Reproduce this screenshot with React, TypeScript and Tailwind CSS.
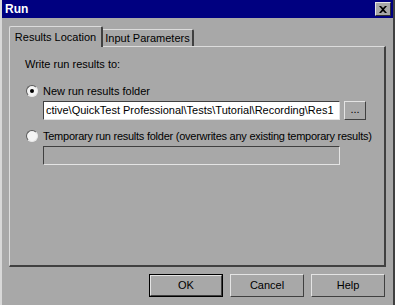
const font = "font-['Liberation_Sans',Arial,sans-serif]";

const Radio = ({ checked }: { checked: boolean }) => (
  <span className="relative flex h-[12px] w-[12px] shrink-0 items-center justify-center rounded-full border border-t-[#5a5a5a] border-l-[#5a5a5a] border-b-[#e8e8e8] border-r-[#e8e8e8] bg-[#f4f4f4]">
    {checked && <span className="h-[4px] w-[4px] rounded-full bg-black" />}
  </span>
);

const Btn = ({ label, def }: { label: string; def?: boolean }) => (
  <button
    type="button"
    className={`h-[23px] w-[74px] text-[11px] text-black ${
      def ? "border border-black" : ""
    }`}
  >
    <span className="flex h-full w-full items-center justify-center border border-t-[#e4e4e4] border-l-[#e4e4e4] border-b-[#404040] border-r-[#404040] bg-[#a8a8a8]">
      {label}
    </span>
  </button>
);

export default function App() {
  return (
    <div
      className={`${font} flex h-[305px] w-[395px] flex-col overflow-hidden border-l-2 border-r-2 border-l-[#d8d8d8] border-r-[#404040] bg-[#a8a8a8] text-black`}
    >
      <div className="flex h-[18px] shrink-0 items-center justify-between bg-[#000080] pl-[3px] pr-[2px]">
        <span className="text-[12px] font-bold text-white">Run</span>
        <button
          type="button"
          className="flex h-[14px] w-[16px] items-center justify-center border border-t-[#e4e4e4] border-l-[#e4e4e4] border-b-[#303030] border-r-[#303030] bg-[#a8a8a8]"
        >
          <svg width="8" height="7" viewBox="0 0 8 7">
            <path d="M0 0h2l2 2 2-2h2L5 3.5 8 7H6L4 5 2 7H0l3-3.5z" fill="black" />
          </svg>
        </button>
      </div>

      <div className="flex flex-col pl-[7px] pt-[8px] text-[11px]">
        <div className="flex h-[20px] items-end whitespace-nowrap">
          <div className="relative z-10 -mb-px flex h-[21px] w-[94px] items-center justify-center rounded-t-[2px] border-t border-l border-r-2 border-t-[#dcdcdc] border-l-[#dcdcdc] border-r-[#404040] bg-[#a8a8a8]">
            Results Location
          </div>
          <div className="flex h-[17px] w-[91px] items-center justify-center rounded-tr-[2px] border-t border-r-2 border-t-[#dcdcdc] border-r-[#404040]">
            Input Parameters
          </div>
        </div>

        <div className="flex h-[221px] w-[377px] flex-col border-t border-l border-r-2 border-b-2 border-t-[#dcdcdc] border-l-[#dcdcdc] border-r-[#404040] border-b-[#404040] pl-[15px] pt-[10px]">
          <div className="leading-[14px]">Write run results to:</div>

          <div className="mt-[13px] flex items-center gap-[5px] pl-[1px]">
            <Radio checked />
            <span className="leading-[14px]">New run results folder</span>
          </div>
          <div className="mt-[3px] flex gap-[4px] pl-[18px]">
            <div className="flex h-[19px] w-[297px] items-center overflow-hidden whitespace-nowrap border border-t-[#404040] border-l-[#404040] border-b-[#e4e4e4] border-r-[#e4e4e4] bg-white pl-[2px]">
              ctive\QuickTest Professional\Tests\Tutorial\Recording\Res1
            </div>
            <button
              type="button"
              className="flex h-[19px] w-[22px] items-center justify-center border border-t-[#e4e4e4] border-l-[#e4e4e4] border-b-[#404040] border-r-[#404040] pb-[3px]"
            >
              ...
            </button>
          </div>

          <div className="mt-[9px] flex items-center gap-[5px] pl-[1px]">
            <Radio checked={false} />
            <span className="whitespace-nowrap leading-[14px] tracking-[-0.25px]">
              Temporary run results folder (overwrites any existing temporary results)
            </span>
          </div>
          <div className="mt-[3px] pl-[18px]">
            <div className="h-[19px] w-[297px] border border-t-[#404040] border-l-[#404040] border-b-[#e4e4e4] border-r-[#e4e4e4] bg-[#a8a8a8]" />
          </div>
        </div>

        <div className="mt-[7px] flex gap-[7px] pl-[140px]">
          <Btn label="OK" def />
          <Btn label="Cancel" />
          <Btn label="Help" />
        </div>
      </div>
    </div>
  );
}
